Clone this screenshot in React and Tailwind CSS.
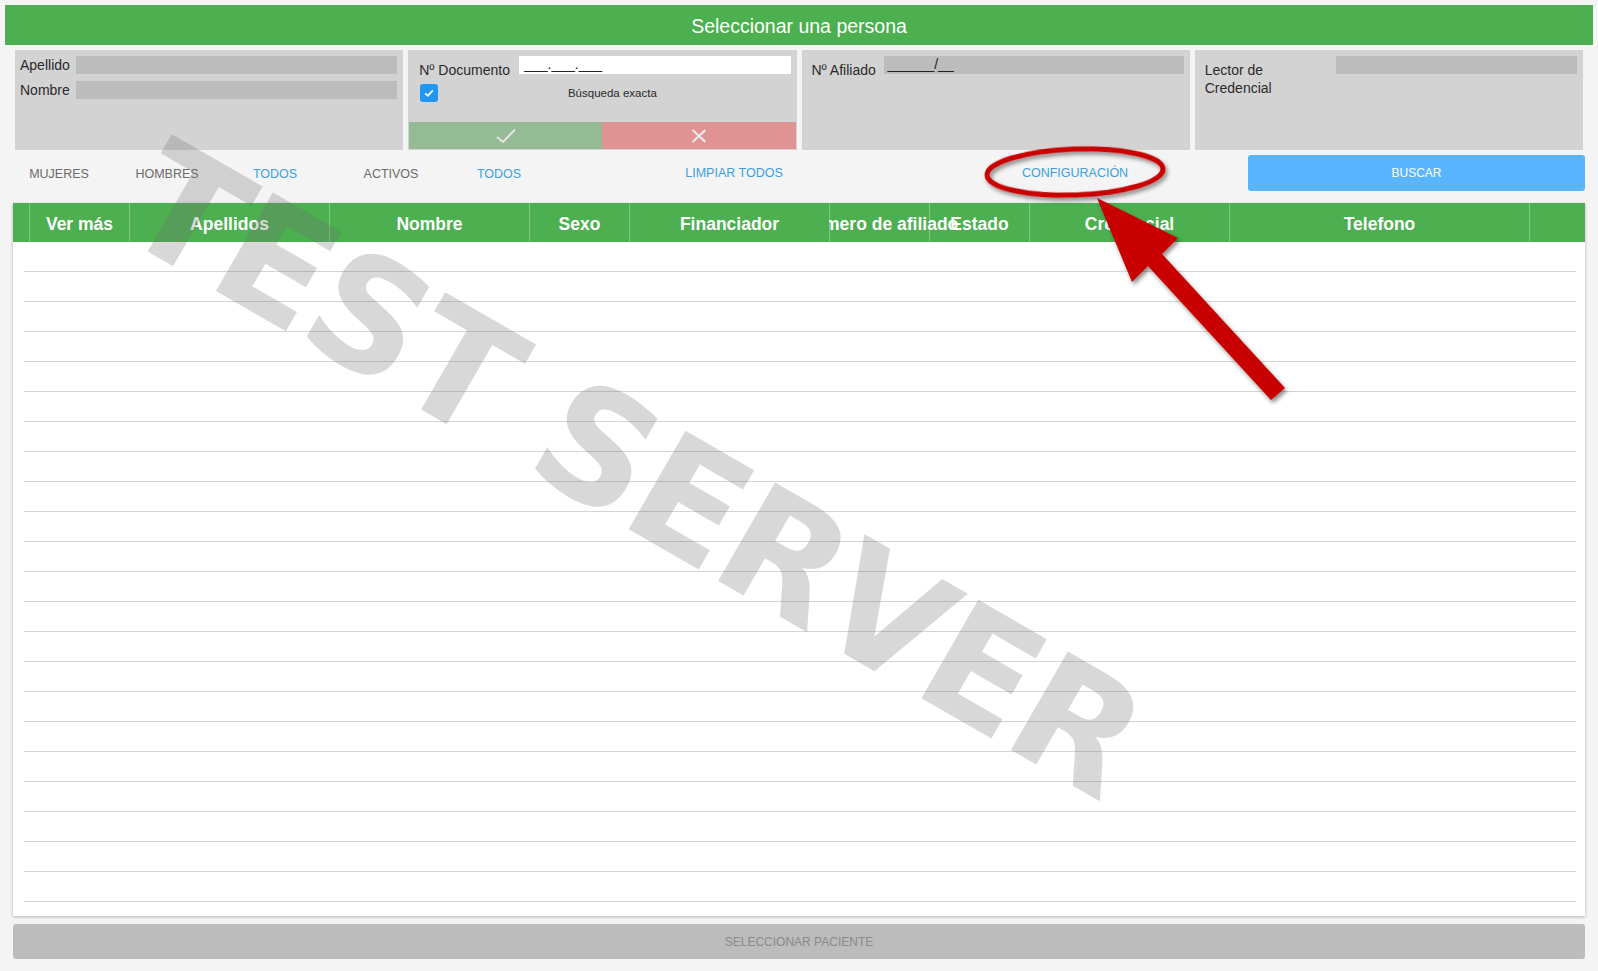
import React from "react";

const FILTROS_SEXO = [
  { label: "MUJERES", activo: false },
  { label: "HOMBRES", activo: false },
  { label: "TODOS", activo: true },
];

const FILTROS_ESTADO = [
  { label: "ACTIVOS", activo: false },
  { label: "TODOS", activo: true },
];

const COLUMNAS = [
  { titulo: "Ver más", ancho: "w-[100px]" },
  { titulo: "Apellidos", ancho: "w-[200px]" },
  { titulo: "Nombre", ancho: "w-[200px]" },
  { titulo: "Sexo", ancho: "w-[100px]" },
  { titulo: "Financiador", ancho: "w-[200px]" },
  { titulo: "Número de afiliado", ancho: "w-[100px]", desborda: true },
  { titulo: "Estado", ancho: "w-[100px]" },
  { titulo: "Credencial", ancho: "w-[200px]" },
  { titulo: "Telefono", ancho: "w-[300px]" },
];

const FILAS = Array.from({ length: 22 }, (_, i) => i);

function Filtro({ label, activo }) {
  return (
    <button
      className={
        "w-[108px] h-[36px] flex items-center justify-center pt-[3px] text-[12.5px] " +
        (activo ? "text-[#3b9fe2]" : "text-[#6b6b6b]")
      }
    >
      {label}
    </button>
  );
}

export default function App() {
  return (
    <div className="relative min-h-[971px] w-full overflow-hidden bg-[#f4f4f4] font-['Liberation_Sans',Arial,sans-serif] pt-[5px]">
      {/* barra de título */}
      <div className="mx-[5px] h-[40px] bg-[#4caf50] flex items-center justify-center pt-[3px] text-white text-[19.5px]">
        Seleccionar una persona
      </div>

      {/* paneles de búsqueda */}
      <div className="mt-[5px] ml-[15px] w-[1568px] grid grid-cols-4 gap-[5px] h-[100px] text-[14px] text-[#2a2a2a]">
        <div className="bg-[#d3d3d3] pt-[6px] pl-[5px] pr-[6px] flex flex-col gap-[7px]">
          <div className="flex items-start h-[18px]">
            <span className="w-[56px] leading-[18px]">Apellido</span>
            <div className="flex-1 h-[18px] bg-[#bcbcbc]" />
          </div>
          <div className="flex items-start h-[18px]">
            <span className="w-[56px] leading-[18px]">Nombre</span>
            <div className="flex-1 h-[18px] bg-[#bcbcbc]" />
          </div>
        </div>

        <div className="bg-[#d3d3d3] pt-[6px] flex flex-col">
          <div className="flex items-start h-[18px] pl-[11px] pr-[6px]">
            <span className="w-[100px] leading-[16px] pt-[6px]">Nº Documento</span>
            <div className="flex-1 h-[18px] bg-white pl-[5px] leading-[16px] text-[#222]">___.___.___</div>
          </div>
          <div className="mt-[10px] flex items-center h-[18px] pl-[12px] pr-[6px]">
            <span className="w-[18px] h-[18px] rounded-[3px] bg-[#2196f3] flex items-center justify-center">
              <svg width="12" height="12" viewBox="0 0 12 12">
                <path d="M2.2 6.3 L4.8 8.8 L9.8 3.4" fill="none" stroke="white" strokeWidth="1.8" />
              </svg>
            </span>
            <span className="flex-1 text-center text-[11.5px] pt-[2px] pr-[4px]">Búsqueda exacta</span>
          </div>
          <div className="mt-auto mx-[1px] mb-[1px] h-[27px] flex">
            <button className="flex-1 bg-[#95bb94] flex items-center justify-center">
              <svg width="22" height="16" viewBox="0 0 22 16">
                <path d="M2 9 L8 14 L20 1.5" fill="none" stroke="#e4e4e4" strokeWidth="2" />
              </svg>
            </button>
            <button className="flex-1 bg-[#e09393] flex items-center justify-center">
              <svg width="16" height="14" viewBox="0 0 16 14">
                <path d="M1.5 1 L14.5 13 M14.5 1 L1.5 13" fill="none" stroke="#ececec" strokeWidth="2" />
              </svg>
            </button>
          </div>
        </div>

        <div className="bg-[#d3d3d3] pt-[6px] pl-[10px] pr-[6px]">
          <div className="flex items-start h-[18px]">
            <span className="w-[72px] leading-[16px] pt-[6px]">Nº Afiliado</span>
            <div className="flex-1 h-[18px] bg-[#bcbcbc] pl-[4px] leading-[16px] text-[#222]">______/__</div>
          </div>
        </div>

        <div className="bg-[#d3d3d3] pt-[6px] pl-[10px] pr-[6px]">
          <div className="flex items-start">
            <span className="w-[131px] leading-[18px] pt-[5px]">
              Lector de
              <br />
              Credencial
            </span>
            <div className="flex-1 h-[18px] bg-[#bcbcbc]" />
          </div>
        </div>
      </div>

      {/* filtros y acciones */}
      <div className="h-[53px] pt-[5px] pl-[5px] flex items-start">
        {FILTROS_SEXO.map((f) => (
          <Filtro key={"s" + f.label} {...f} />
        ))}
        <div className="w-[8px]" />
        {FILTROS_ESTADO.map((f) => (
          <Filtro key={"e" + f.label} {...f} />
        ))}
        <button className="ml-[81px] w-[200px] h-[36px] flex items-center justify-center text-[12.5px] text-[#3b9fe2]">
          LIMPIAR TODOS
        </button>
        <button className="ml-[141px] w-[200px] h-[36px] flex items-center justify-center text-[12.5px] text-[#3b9fe2]">
          CONFIGURACIÓN
        </button>
        <button className="ml-[73px] w-[337px] h-[36px] rounded-[3px] bg-[#59b5fd] flex items-center justify-center text-[12px] text-white">
          BUSCAR
        </button>
      </div>

      {/* tabla de resultados */}
      <div className="mx-[13px] w-[1572px] h-[713px] bg-white shadow-[0_1px_3px_rgba(0,0,0,0.28)] flex flex-col">
        <div className="h-[39px] bg-[#4caf50] flex text-white font-bold text-[17.5px]">
          <div className="w-[16px]" />
          {COLUMNAS.map((c) => (
            <div
              key={c.titulo}
              className={
                c.ancho +
                " shrink-0 flex items-center justify-center pt-[3px] whitespace-nowrap border-l border-[#80c783]" +
                (c.desborda ? " [clip-path:inset(0_-200px_0_0)]" : "")
              }
            >
              <span>{c.titulo}</span>
            </div>
          ))}
          <div className="flex-1 border-l border-[#80c783]" />
        </div>
        <div className="ml-[11px] mr-[9px]">
          {FILAS.map((i) => (
            <div key={i} className="h-[30px] border-b border-[#d4d4d4]" />
          ))}
        </div>
      </div>

      <button className="mt-[8px] mx-[13px] w-[1572px] h-[35px] rounded-[3px] bg-[#bcbcbc] flex items-center justify-center text-[12px] text-[#8a8a8a]">
        SELECCIONAR PACIENTE
      </button>

      {/* marca de agua del entorno de pruebas */}
      <div className="pointer-events-none absolute left-[634px] top-[470px] -translate-x-1/2 -translate-y-1/2 rotate-[30deg] whitespace-nowrap font-['DejaVu_Sans',sans-serif] font-bold text-[156px] tracking-[-0.02em] leading-none text-[rgba(110,110,110,0.27)]">
        TEST SERVER
      </div>

      {/* señalización en rojo */}
      <svg
        className="pointer-events-none absolute left-0 top-0"
        width="1598"
        height="971"
        viewBox="0 0 1598 971"
      >
        <defs>
          <filter id="sombra" x="-20%" y="-20%" width="140%" height="140%">
            <feDropShadow dx="2" dy="3" stdDeviation="2" floodColor="#000" floodOpacity="0.45" />
          </filter>
        </defs>
        <ellipse
          cx="1075"
          cy="172"
          rx="88"
          ry="23"
          fill="none"
          stroke="#c80000"
          strokeWidth="5"
          filter="url(#sombra)"
          transform="rotate(-2 1075 172)"
        />
        <polygon
          points="1097,198 1178,238 1162,254 1285,388 1271,400 1148,266 1132,282"
          fill="#c80000"
          filter="url(#sombra)"
        />
      </svg>
    </div>
  );
}
